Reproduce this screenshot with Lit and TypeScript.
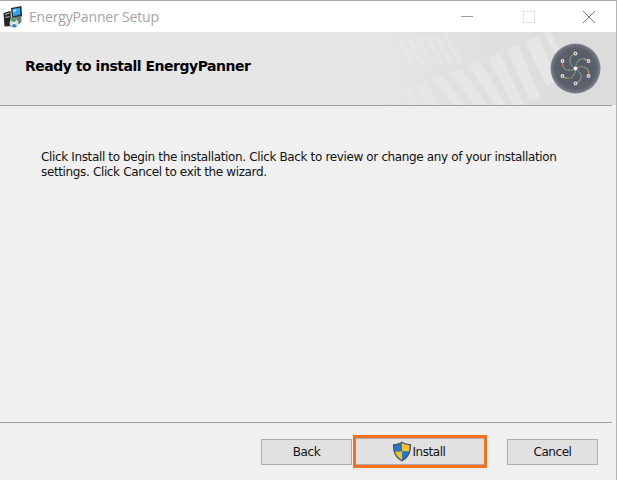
import { LitElement, html, css, svg } from "lit";
import { customElement } from "lit/decorators.js";

/* Bars of the banner watermark, as [topLeft, topRight, bottomRight, bottomLeft] points in a 3x zoom grid. */
const mainBars = [
  [0, 180, 30, 172, 62, 225, 32, 225],
  [42, 165, 72, 155, 118, 225, 85, 225],
  [95, 148, 128, 138, 195, 225, 160, 225],
  [150, 128, 185, 118, 262, 225, 222, 225],
  [207, 105, 240, 95, 318, 225, 283, 225],
  [263, 83, 300, 70, 372, 225, 338, 225],
  [320, 58, 355, 45, 420, 200, 390, 212],
  [375, 35, 415, 20, 470, 150, 440, 170],
  [432, 10, 450, 4, 480, 60, 470, 80],
];
const faintBars = [0, 1, 2, 3, 4, 5].map((i) => {
  const x = -12 + i * 28;
  return [x, 26 - i * 2, x + 15, 22 - i * 2, x + 62, 104 - i * 2, x + 46, 112 - i * 2];
});
const toPts = (b: number[]) =>
  b.map((v, i) => (i % 2 === 0 ? 400 + v / 3 : v / 3 - 2).toFixed(1)).join(" ");

@customElement("app-root")
export class AppRoot extends LitElement {
  static styles = css`
    :host { display: block; width: 617px; height: 480px; overflow: hidden; }
    .win {
      box-sizing: border-box; width: 617px; height: 480px; background: #f0f0f0;
      border-top: 1px solid #a9a9a9; border-right: 1px solid #b4b4b4;
      display: flex; flex-direction: column; color: #000;
    }
    .titlebar { height: 31px; background: #fff; display: flex; align-items: center; flex: none; }
    .appicon { width: 22px; height: 23px; margin-left: 3px; flex: none; }
    .title { font-family: "Open Sans", sans-serif; font-size: 14px; color: #a4a4a4; margin-left: 4px; letter-spacing: -0.16px; }
    .controls { margin-left: auto; display: flex; align-items: center; }
    .ctl { width: 16px; height: 16px; display: block; }
    .min { margin-right: 46px; }
    .max { margin-right: 44px; }
    .close { margin-right: 19px; }
    .banner {
      position: relative; height: 73px; flex: none;
      background: linear-gradient(90deg, #e6e6e6 0%, #e6e6e6 60%, #e0e0e0 76%, #dbdbdb 100%);
      display: flex; align-items: center; overflow: hidden;
    }
    .pattern { position: absolute; inset: 0; width: 616px; height: 73px; }
    .heading { position: relative; margin: 0 0 6px 25px; font-size: 14px; font-weight: 700; font-family: "DejaVu Sans", sans-serif; letter-spacing: -0.48px; }
    .logo { position: absolute; left: 550px; top: 11px; width: 51px; height: 51px; }
    .rule { height: 1px; background: #a0a0a0; margin-right: 4px; flex: none; }
    .content { flex: 1; padding: 44px 50px 0 41px; }
    .content p { margin: 0; font-size: 12px; line-height: 15px; font-family: "DejaVu Sans", sans-serif; letter-spacing: -0.36px; color: #101010; }
    .footer { height: 57px; box-sizing: border-box; flex: none; display: flex; align-items: center; padding: 0 18px 0 261px; }
    .btn {
      box-sizing: border-box; height: 26px; background: #e1e1e1; border: 1px solid #adadad;
      display: flex; align-items: center; justify-content: center; gap: 1px;
      font-size: 12px; font-family: "DejaVu Sans", sans-serif; letter-spacing: -0.45px; color: #111;
    }
    .back, .cancel { width: 91px; }
    .focus { box-sizing: border-box; width: 134px; height: 33px; margin-left: 1px; border: 3px solid #f37021; display: flex; }
    .focus .btn { flex: 1; border-left: 0; border-right: 0; height: 27px; padding-right: 3px; }
    .cancel { margin-left: auto; }
    .shield { width: 20px; height: 21px; flex: none; }
  `;

  render() {
    return html`<div class="win">
      <div class="titlebar">
        <svg class="appicon" viewBox="0 0 22 23" aria-hidden="true">
          <path d="M0.5 8 L7.5 6 L8.5 21 L1.5 21.5 Z" fill="#262626"/>
          <path d="M2 9.5 L6.5 8.2 M2.2 12.5 L6.6 11.5" stroke="#bdbdbd" stroke-width="1"/>
          <path d="M8 3 L18.5 1 L19 11.5 L9 14 Z" fill="#26303f"/>
          <path d="M9.5 4 L17 2.7 L17.3 9.5 L10 11.3 Z" fill="#2ea6f0"/>
          <path d="M10.2 4.8 L14 4 L12 7 L10.4 7.5 Z" fill="#a8e6ff"/>
          <path d="M7 13 L18 11 L18.5 17 L13 21.5 L7 21.5 Z" fill="#717c72"/>
          <circle cx="11" cy="18" r="4.4" fill="#d8e0e2"/>
          <path d="M11 18 L7.8 15 A4.4 4.4 0 0 1 13.6 14.5 Z" fill="#47a45c"/>
          <path d="M11 18 L14 21.2 A4.4 4.4 0 0 1 8.5 21.6 Z" fill="#3c86c8"/>
          <circle cx="11" cy="18" r="1.1" fill="#fff"/>
        </svg>
        <span class="title">EnergyPanner Setup</span>
        <div class="controls">
          <svg class="ctl min" viewBox="0 0 16 16" aria-hidden="true"><path d="M2 7.5 H14" stroke="#9a9a9a" stroke-width="1"/></svg>
          <svg class="ctl max" viewBox="0 0 16 16" aria-hidden="true"><rect x="2.5" y="2.5" width="11" height="11" fill="none" stroke="#e4e4e4"/></svg>
          <svg class="ctl close" viewBox="0 0 16 16" aria-hidden="true"><path d="M2 2 L14 14 M14 2 L2 14" stroke="#7a7a7a" stroke-width="1" fill="none"/></svg>
        </div>
      </div>
      <div class="banner">
        <svg class="pattern" viewBox="0 0 616 73" aria-hidden="true">
          ${faintBars.map((b) => svg`<polygon points=${toPts(b)} fill="#eaeaea" opacity="0.4"/>`)}
          ${mainBars.map((b) => svg`<polygon points=${toPts(b)} fill="#e6e6e6"/>`)}
        </svg>
        <h1 class="heading">Ready to install EnergyPanner</h1>
        <svg class="logo" viewBox="0 0 51 51" aria-hidden="true">
          <defs>
            <radialGradient id="lg" cx="50%" cy="50%" r="50%">
              <stop offset="0%" stop-color="#555967"/>
              <stop offset="80%" stop-color="#5b5f6c"/>
              <stop offset="92%" stop-color="#6c707b"/>
              <stop offset="100%" stop-color="#85888f"/>
            </radialGradient>
            <filter id="soft" x="-5%" y="-5%" width="110%" height="110%"><feGaussianBlur stdDeviation="0.25"/></filter>
          </defs>
          <g filter="url(#soft)">
            <circle cx="25.5" cy="25.5" r="25" fill="url(#lg)"/>
            <path d="M1 25.5 H50 M25.5 1 V50" stroke="#4b4f5b" stroke-width="0.5" opacity="0.45"/>
            ${[0, 60, 120, 180, 240, 300].map((a) => svg`
              <g transform="rotate(${a} 25.5 25.5)">
                <path d="M25.5 25.5 C19.5 22 17.5 15 23.5 11.5" fill="none" stroke="#8fc274" stroke-width="1" stroke-dasharray="2 0.8"/>
                <path d="M21.2 13.2 L23.5 11.5" stroke="#e08a4c" stroke-width="1"/>
                <circle cx="25.5" cy="10.5" r="1.9" fill="#dcdee1"/>
                <circle cx="25.5" cy="10.5" r="0.7" fill="#5a5e6a"/>
              </g>`)}
            <circle cx="25.5" cy="25.5" r="2" fill="#f1f2f3"/>
          </g>
        </svg>
      </div>
      <div class="rule"></div>
      <div class="content">
        <p>Click Install to begin the installation. Click Back to review or change any of your installation settings. Click Cancel to exit the wizard.</p>
      </div>
      <div class="rule"></div>
      <div class="footer">
        <div class="btn back">Back</div>
        <div class="focus">
          <div class="btn">
            <svg class="shield" viewBox="0 0 20 21" aria-hidden="true">
              <path d="M10 0.5 C13 2.5 16 3 19 3 C19.5 11 17 17 10 20.5 C3 17 0.5 11 1 3 C4 3 7 2.5 10 0.5 Z" fill="#4d5a66"/>
              <path d="M10 2 C7.5 3.5 5 4 2.5 4.2 C2.4 6.5 2.5 8.5 3 10.5 L10 10.5 Z" fill="#1f78c8"/>
              <path d="M10 2 C12.5 3.5 15 4 17.5 4.2 C17.6 6.5 17.5 8.5 17 10.5 L10 10.5 Z" fill="#f9c02a"/>
              <path d="M3 10.5 C4 14 6.2 17 10 19 L10 10.5 Z" fill="#f9c02a"/>
              <path d="M17 10.5 C16 14 13.8 17 10 19 L10 10.5 Z" fill="#1f78c8"/>
            </svg>
            <span>Install</span>
          </div>
        </div>
        <div class="btn cancel">Cancel</div>
      </div>
    </div>`;
  }
}
